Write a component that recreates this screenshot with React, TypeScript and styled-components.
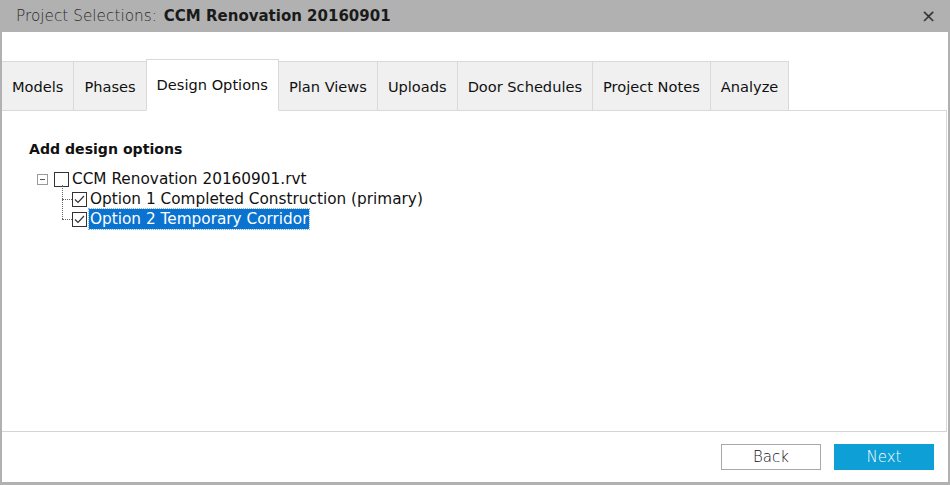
import styled, { createGlobalStyle } from 'styled-components';

const tabs = ['Models', 'Phases', 'Design Options', 'Plan Views', 'Uploads', 'Door Schedules', 'Project Notes', 'Analyze'];
const activeTab = 'Design Options';

const options = [
  { label: 'Option 1 Completed Construction (primary)', checked: true, selected: false },
  { label: 'Option 2 Temporary Corridor', checked: true, selected: true }
];

const GlobalStyle = createGlobalStyle`
  html, body {
    margin: 0;
    padding: 0;
    background: #ffffff;
  }
  body {
    font-family: 'DejaVu Sans', Verdana, sans-serif;
    color: #111;
  }
`;

const CheckMark = () => (
  <svg width="11" height="9" viewBox="0 0 11 9">
    <path d="M1 4.5 L4 7.5 L10 1" fill="none" stroke="#333" strokeWidth="1.2" />
  </svg>
);

const App = () => {
  return (
    <>
      <GlobalStyle />
      <Window>
        <TitleBar>
          <Title>
            <TitleLabel>Project Selections:</TitleLabel>
            <TitleName>CCM Renovation 20160901</TitleName>
          </Title>
          <CloseButton>×</CloseButton>
        </TitleBar>
        <Body>
          <TabStrip>
            {tabs.map((t) => (
              <Tab key={t} active={t === activeTab}>
                {t}
              </Tab>
            ))}
          </TabStrip>
          <Panel>
            <Heading>Add design options</Heading>
            <Tree>
              <Row>
                <Expander>
                  <svg width="11" height="11" viewBox="0 0 11 11">
                    <rect x="0.5" y="0.5" width="10" height="10" fill="#fff" stroke="#9a9a9a" />
                    <path d="M3 5.5 H8" stroke="#555" strokeWidth="1" />
                  </svg>
                </Expander>
                <CheckBox />
                <Label>CCM Renovation 20160901.rvt</Label>
              </Row>
              <Children>
                {options.map((o) => (
                  <ChildRow key={o.label}>
                    <CheckBox>{o.checked && <CheckMark />}</CheckBox>
                    <Label selected={o.selected}>{o.label}</Label>
                  </ChildRow>
                ))}
              </Children>
            </Tree>
          </Panel>
          <Footer>
            <Button>Back</Button>
            <Button primary>Next</Button>
          </Footer>
        </Body>
      </Window>
    </>
  );
};

const Window = styled.div`
  width: 950px;
  height: 485px;
  box-sizing: border-box;
  background: #b1b1b1;
  padding: 0 2px 3px 2px;
  display: flex;
  flex-direction: column;
`;

const TitleBar = styled.div`
  height: 32px;
  flex-shrink: 0;
  display: flex;
  align-items: center;
  justify-content: space-between;
  padding: 0 12px 0 14px;
`;

const Title = styled.div`
  display: flex;
  align-items: baseline;
  gap: 7px;
  font-size: 15px;
`;

const TitleLabel = styled.span`
  font-family: 'DejaVu Sans', sans-serif;
  font-weight: 200;
  font-size: 15.3px;
  color: #2a2a2a;
`;

const TitleName = styled.span`
  font-family: 'DejaVu Sans', Verdana, sans-serif;
  font-weight: bold;
  color: #1a1a1a;
  font-size: 15px;
`;

const CloseButton = styled.span`
  font-family: 'DejaVu Sans', sans-serif;
  font-size: 18px;
  color: #333;
  line-height: 1;
`;

const Body = styled.div`
  flex: 1;
  background: #ffffff;
  display: flex;
  flex-direction: column;
  padding-top: 26px;
`;

const TabStrip = styled.div`
  display: flex;
  align-items: flex-end;
  height: 52px;
  flex-shrink: 0;
`;

const Tab = styled.div<{ active?: boolean }>`
  box-sizing: border-box;
  height: ${({ active }) => (active ? '52px' : '50px')};
  padding: ${({ active }) => (active ? '0 10px 2px' : '0 10px')};
  display: flex;
  align-items: center;
  font-size: 14.6px;
  color: #111;
  background: ${({ active }) => (active ? '#ffffff' : '#f0f0f0')};
  border-top: 1px solid #d9d9d9;
  border-right: 1px solid #d9d9d9;
  border-left: ${({ active }) => (active ? '1px solid #d9d9d9' : 'none')};
  margin-left: ${({ active }) => (active ? '-1px' : '0')};
  border-bottom: ${({ active }) => (active ? '1px solid #ffffff' : '1px solid #d9d9d9')};
  margin-bottom: -1px;
  position: relative;
  white-space: nowrap;
`;

const Panel = styled.div`
  flex: 1;
  border-top: 1px solid #d9d9d9;
  border-right: 1px solid #d9d9d9;
  border-bottom: 1px solid #d4d4d4;
  margin-right: 1px;
  padding: 30px 0 0 27px;
`;

const Heading = styled.div`
  font-weight: bold;
  font-size: 14.1px;
  color: #111;
  margin-bottom: 12px;
`;

const Tree = styled.div`
  padding-left: 8px;
  font-size: 15.3px;
`;

const Row = styled.div`
  display: flex;
  align-items: center;
  height: 20px;
`;

const Expander = styled.span`
  width: 11px;
  height: 11px;
  display: flex;
  margin-right: 6px;
`;

const CheckBox = styled.span`
  width: 15px;
  height: 15px;
  box-sizing: border-box;
  border: 1px solid #333;
  background: #fff;
  display: flex;
  align-items: center;
  justify-content: center;
  margin-right: 2px;
  flex-shrink: 0;
`;

const Label = styled.span<{ selected?: boolean }>`
  white-space: nowrap;
  padding: 1px 1px;
  line-height: 18px;
  color: ${({ selected }) => (selected ? '#ffffff' : '#111')};
  background: ${({ selected }) => (selected ? '#0a72cf' : 'transparent')};
  outline: ${({ selected }) => (selected ? '1px dotted #7fb6e8' : 'none')};
`;

const Children = styled.div`
  margin-left: 35px;
  position: relative;
  &::before {
    content: '';
    position: absolute;
    left: -10px;
    top: -4px;
    height: 34px;
    border-left: 1px dotted #666;
  }
`;

const ChildRow = styled(Row)`
  position: relative;
  &::before {
    content: '';
    position: absolute;
    left: -10px;
    top: 10px;
    width: 10px;
    border-top: 1px dotted #666;
  }
`;

const Footer = styled.div`
  height: 50px;
  flex-shrink: 0;
  display: flex;
  align-items: center;
  justify-content: flex-end;
  gap: 13px;
  padding-right: 14px;
`;

const Button = styled.button<{ primary?: boolean }>`
  width: 100px;
  height: 26px;
  box-sizing: border-box;
  font-family: 'DejaVu Sans', sans-serif;
  font-weight: 200;
  font-size: 15px;
  color: ${({ primary }) => (primary ? '#ffffff' : '#111')};
  background: ${({ primary }) => (primary ? '#0d9fd6' : '#ffffff')};
  border: 1px solid ${({ primary }) => (primary ? '#0d9fd6' : '#a8a8a8')};
  padding: 0;
  cursor: pointer;
`;

export default App;
